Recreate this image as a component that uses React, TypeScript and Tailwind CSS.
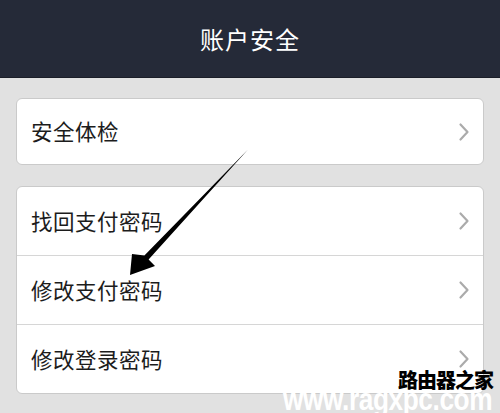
import React from 'react';

const font = { fontFamily: '"Noto Sans CJK SC", "Noto Sans", sans-serif' };

const Chevron = () => (
  <svg width="12" height="20" viewBox="0 0 12 20" className="shrink-0">
    <path d="M2.5 2.5 L9.5 10 L2.5 17.5" fill="none" stroke="#ababab" strokeWidth="2.2" strokeLinecap="round" strokeLinejoin="round" />
  </svg>
);

const Row = ({ label, last }: { label: string; last?: boolean }) => (
  <div className={`flex items-center justify-between pl-[14px] pr-[13px] ${last ? 'h-[68px]' : 'h-[69px] border-b border-[#d6d6d6]'}`}>
    <span className="text-[21.5px] text-[#1c1c1c] tracking-[0.5px]">{label}</span>
    <Chevron />
  </div>
);

export default function App() {
  return (
    <div className="relative w-[500px] h-[413px] overflow-hidden bg-[#e1e1e1]" style={font}>
      <header className="h-[78px] bg-[#252a38] border-b border-[#1b1e28] flex items-center justify-center">
        <h1 className="text-[24px] text-white tracking-[1px]">账户安全</h1>
      </header>

      <div className="px-4 pt-[20px] flex flex-col gap-[21px]">
        <div className="bg-white border border-[#cacaca] rounded-[6px] overflow-hidden">
          <div className="h-[65px] flex items-center justify-between pl-[14px] pr-[13px]">
            <span className="text-[21.5px] text-[#1c1c1c] tracking-[0.5px]">安全体检</span>
            <Chevron />
          </div>
        </div>

        <div className="bg-white border border-[#cacaca] rounded-[6px] overflow-hidden">
          <Row label="找回支付密码" />
          <Row label="修改支付密码" />
          <Row label="修改登录密码" last />
        </div>
      </div>

      {/* annotation arrow */}
      <svg className="absolute left-0 top-0" width="500" height="413" viewBox="0 0 500 413">
        <polygon
          points="248,149.5 148.6,259.6 155,266 130,275 132,254 144.4,255.6"
          fill="#000"
        />
      </svg>

      {/* watermark */}
      <div className="absolute left-[398px] top-[370px] text-[20px] font-black text-black leading-none tracking-[-1px]">
        路由器之家
      </div>
      <div
        className="absolute left-[283px] top-[383px] text-[32px] font-bold text-white leading-none tracking-[-0.5px]"
        style={{ fontFamily: '"Liberation Sans", sans-serif', transform: 'scaleX(0.82)', transformOrigin: 'left top' }}
      >
        www.ragxpc.com
      </div>
    </div>
  );
}
